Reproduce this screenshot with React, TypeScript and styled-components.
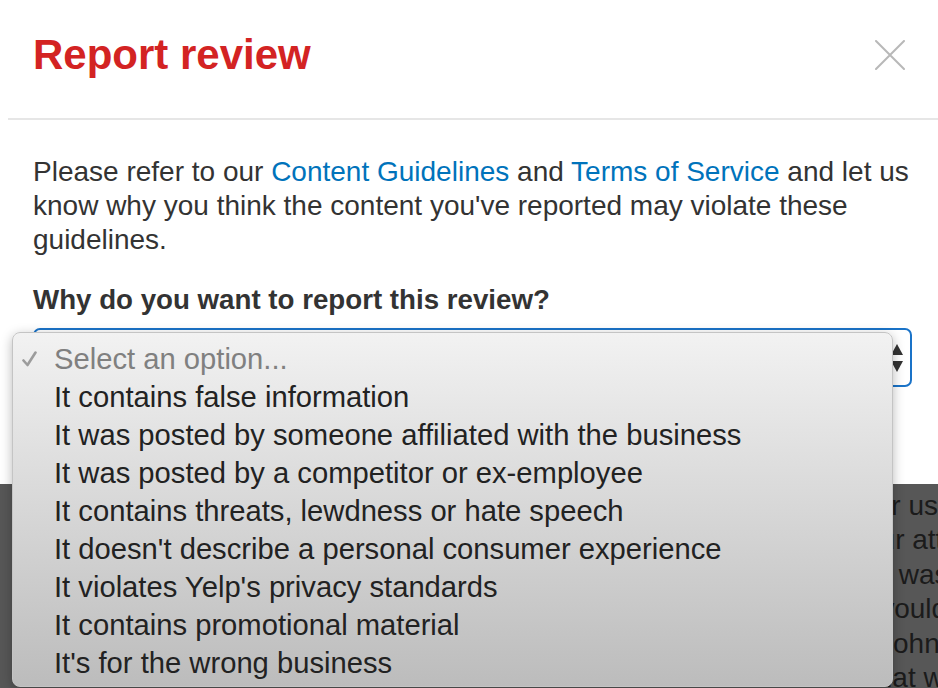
import styled, { createGlobalStyle } from "styled-components";

const GlobalStyle = createGlobalStyle`
  html, body {
    margin: 0;
    padding: 0;
  }

  body {
    font-family: "Liberation Sans", Arial, sans-serif;
    background: #575757;
  }
`;

const options = [
  "It contains false information",
  "It was posted by someone affiliated with the business",
  "It was posted by a competitor or ex-employee",
  "It contains threats, lewdness or hate speech",
  "It doesn't describe a personal consumer experience",
  "It violates Yelp's privacy standards",
  "It contains promotional material",
  "It's for the wrong business",
];

// page text behind the overlay, only its tail shows right of the menu
const behindLines = [
  { text: "for us", offset: 868 },
  { text: "our att", offset: 864 },
  { text: "it was", offset: 877 },
  { text: "would", offset: 874 },
  { text: "John", offset: 879 },
  { text: "that w", offset: 869 },
];

export default function App() {
  return (
    <>
      <GlobalStyle />
      <Page>
        <Modal>
          <Header>
            <Title>Report review</Title>
            <CloseButton type="button" aria-label="Close">
              <svg width="30" height="30" viewBox="0 0 30 30">
                <path
                  d="M1 1 L29 29 M29 1 L1 29"
                  stroke="#b8b8b8"
                  strokeWidth="2"
                  strokeLinecap="round"
                />
              </svg>
            </CloseButton>
          </Header>

          <Body>
            <Intro>
              Please refer to our <Link href="#">Content Guidelines</Link> and{" "}
              <Link href="#">Terms of Service</Link> and let us know why you
              think the content you've reported may violate these guidelines.
            </Intro>

            <Question>Why do you want to report this review?</Question>

            <SelectWrap>
              <SelectBox>
                <SelectValue>Select an option...</SelectValue>
                <svg width="14" height="30" viewBox="0 0 14 30">
                  <path d="M7 1 L13 12 L1 12 Z" fill="#333" />
                  <path d="M7 29 L13 18 L1 18 Z" fill="#333" />
                </svg>
              </SelectBox>

              <OptionList role="listbox">
                <OptionItem $placeholder>
                  <Check>
                    <svg width="15" height="16" viewBox="0 0 15 16">
                      <path
                        d="M1.5 9.5 L5.5 14 L13.5 1.5"
                        fill="none"
                        stroke="#9c9c9c"
                        strokeWidth="2.6"
                        strokeLinecap="round"
                        strokeLinejoin="round"
                      />
                    </svg>
                  </Check>
                  Select an option...
                </OptionItem>
                {options.map((option) => (
                  <OptionItem key={option}>
                    <Check />
                    {option}
                  </OptionItem>
                ))}
              </OptionList>
            </SelectWrap>
          </Body>
        </Modal>

        <Behind>
          {behindLines.map((line) => (
            <BehindLine key={line.text} $offset={line.offset}>
              {line.text}
            </BehindLine>
          ))}
        </Behind>
      </Page>
    </>
  );
}

const Page = styled.div`
  width: 938px;
  height: 688px;
  overflow: hidden;
  display: flex;
  flex-direction: column;
  background: #575757;
`;

const Modal = styled.div`
  height: 484px;
  flex-shrink: 0;
  background: #fff;
  position: relative;
  z-index: 1;
`;

const Header = styled.div`
  display: flex;
  align-items: center;
  justify-content: space-between;
  margin-left: 8px;
  padding: 31px 33px 39px 25px;
  border-bottom: 2px solid #e6e6e6;
`;

const Title = styled.h2`
  margin: 0;
  font-size: 42px;
  line-height: 48px;
  font-weight: 700;
  color: #d32323;
`;

const CloseButton = styled.button`
  display: flex;
  padding: 0;
  border: 0;
  background: transparent;
  cursor: pointer;
`;

const Body = styled.div`
  padding: 35px 26px 0 33px;
`;

const Intro = styled.p`
  margin: 0 0 26px;
  font-size: 28px;
  line-height: 34px;
  color: #333;
`;

const Link = styled.a`
  color: #0073bb;
  text-decoration: none;
`;

const Question = styled.h3`
  margin: 0 0 11px;
  font-size: 27.7px;
  line-height: 34px;
  font-weight: 700;
  color: #333;
`;

const SelectWrap = styled.div`
  position: relative;
`;

const SelectBox = styled.div`
  height: 59px;
  box-sizing: border-box;
  display: flex;
  align-items: center;
  justify-content: space-between;
  padding: 0 6px 0 20px;
  border: 2px solid #1a73c8;
  border-radius: 7px;
  background: #fff;
`;

const SelectValue = styled.span`
  font-size: 28px;
  color: #333;
`;

const OptionList = styled.div`
  position: absolute;
  top: 4px;
  left: -21px;
  width: 881px;
  height: 355px;
  box-sizing: border-box;
  padding: 7px 0 6px;
  border: 1px solid #c4c4c4;
  border-radius: 8px;
  background: linear-gradient(#f2f2f2, #bcbcbc);
  box-shadow: 0 3px 12px rgba(0, 0, 0, 0.28);
  z-index: 2;
`;

const OptionItem = styled.div<{ $placeholder?: boolean }>`
  display: flex;
  align-items: center;
  height: 38px;
  font-size: 29.2px;
  color: ${({ $placeholder }) => ($placeholder ? "#808080" : "#222")};
  white-space: nowrap;
`;

const Check = styled.span`
  display: flex;
  align-items: center;
  width: 41px;
  flex-shrink: 0;
  padding-left: 9px;
  box-sizing: border-box;
`;

const Behind = styled.div`
  flex: 1;
  padding-top: 5px;
  overflow: hidden;
`;

const BehindLine = styled.div<{ $offset: number }>`
  margin-left: ${({ $offset }) => $offset}px;
  font-size: 28px;
  line-height: 34.4px;
  color: #1b1b1b;
  white-space: nowrap;
`;
